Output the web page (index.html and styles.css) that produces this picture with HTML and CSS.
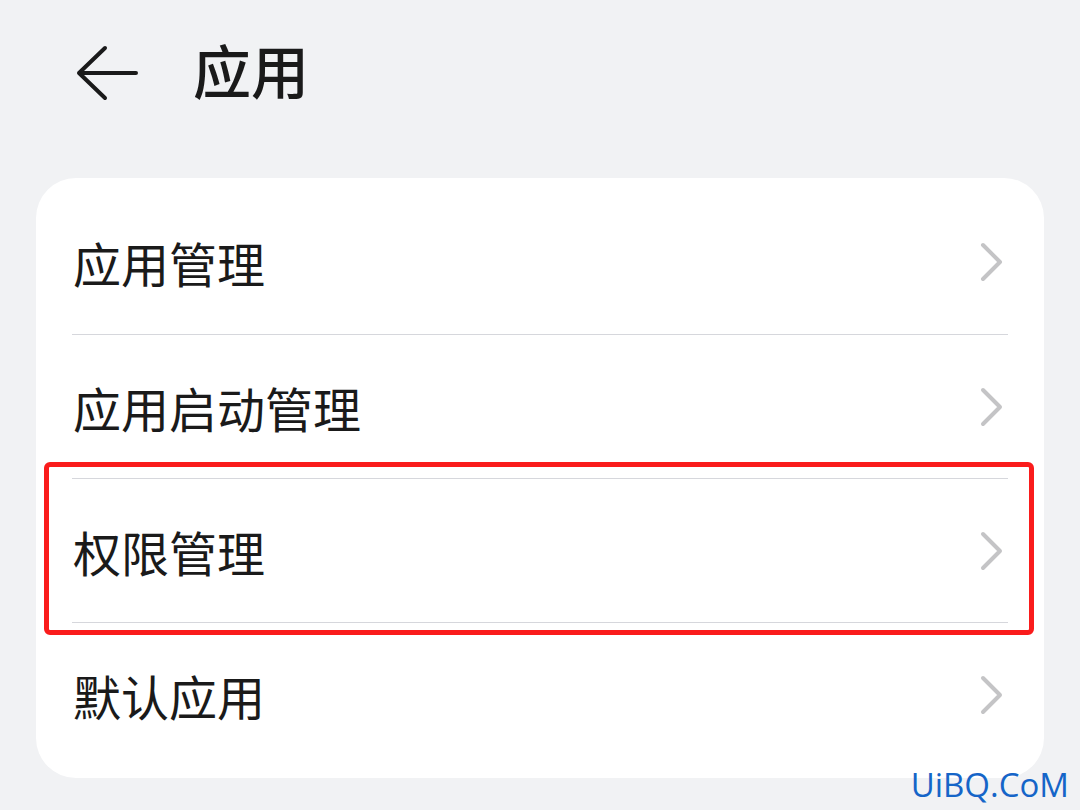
FILE: index.html
```html
<!DOCTYPE html>
<html lang="zh-CN">
<head>
    <meta charset="UTF-8">
    <meta name="viewport" content="width=device-width, initial-scale=1.0">
    <title>应用</title>
    <link rel="stylesheet" href="styles.css">
</head>
<body>
    <div class="page">
        <header class="topbar">
            <button class="back" aria-label="返回">
                <svg width="64" height="56" viewBox="0 0 64 56">
                    <path d="M29 3 L3 28 L29 53 M3 28 H60" fill="none" stroke="#1a1a1a" stroke-width="4" stroke-linecap="round" stroke-linejoin="round"/>
                </svg>
            </button>
            <h1>应用</h1>
        </header>

        <ul class="card">
            <li class="row">
                <span class="label">应用管理</span>
                <svg class="chevron" width="24" height="40" viewBox="0 0 24 40"><path d="M4 3 L21 20 L4 37" /></svg>
            </li>
            <li class="row">
                <span class="label">应用启动管理</span>
                <svg class="chevron" width="24" height="40" viewBox="0 0 24 40"><path d="M4 3 L21 20 L4 37" /></svg>
            </li>
            <li class="row">
                <span class="label">权限管理</span>
                <svg class="chevron" width="24" height="40" viewBox="0 0 24 40"><path d="M4 3 L21 20 L4 37" /></svg>
                <div class="highlight"></div>
            </li>
            <li class="row">
                <span class="label">默认应用</span>
                <svg class="chevron" width="24" height="40" viewBox="0 0 24 40"><path d="M4 3 L21 20 L4 37" /></svg>
            </li>
        </ul>

        <div class="watermark">UiBQ.CoM</div>
    </div>
</body>
</html>
```

FILE: styles.css
```css
body {
    margin: 0;
    background-color: #f1f2f4;
    font-family: "Noto Sans CJK SC", "Noto Sans", sans-serif;
    color: #1a1a1a;
}
.page {
    position: relative;
    width: 1080px;
    height: 810px;
    overflow: hidden;
}
.topbar {
    display: flex;
    align-items: center;
    height: 144px;
    padding-left: 76px;
}
.back {
    display: flex;
    background: none;
    border: none;
    padding: 0;
    margin-top: 2px;
}
.topbar h1 {
    margin: 0 0 6px 53px;
    font-size: 58px;
    font-weight: 500;
    line-height: 1;
}
.card {
    list-style: none;
    margin: 34px 0 0 36px;
    padding: 12px 0;
    width: 1008px;
    background: white;
    border-radius: 40px;
}
.row {
    position: relative;
    display: flex;
    align-items: center;
    justify-content: space-between;
    height: 144px;
    margin: 0 36px;
}
.row + .row {
    border-top: 1px solid #d6d7dc;
    height: 143px;
}
.label {
    font-size: 48px;
    line-height: 1;
    margin-left: 1px;
}
.chevron {
    margin-right: 5px;
}
.chevron path {
    fill: none;
    stroke: #c4c4c6;
    stroke-width: 4;
    stroke-linecap: round;
    stroke-linejoin: round;
}
.highlight {
    position: absolute;
    top: -17px;
    bottom: -13px;
    left: -28px;
    right: -26px;
    border: 5px solid #fa1c1c;
    border-radius: 6px;
}
.watermark {
    position: absolute;
    right: 11px;
    bottom: 3px;
    font-family: "Open Sans", sans-serif;
    font-size: 33px;
    color: #1565c8;
}
```
